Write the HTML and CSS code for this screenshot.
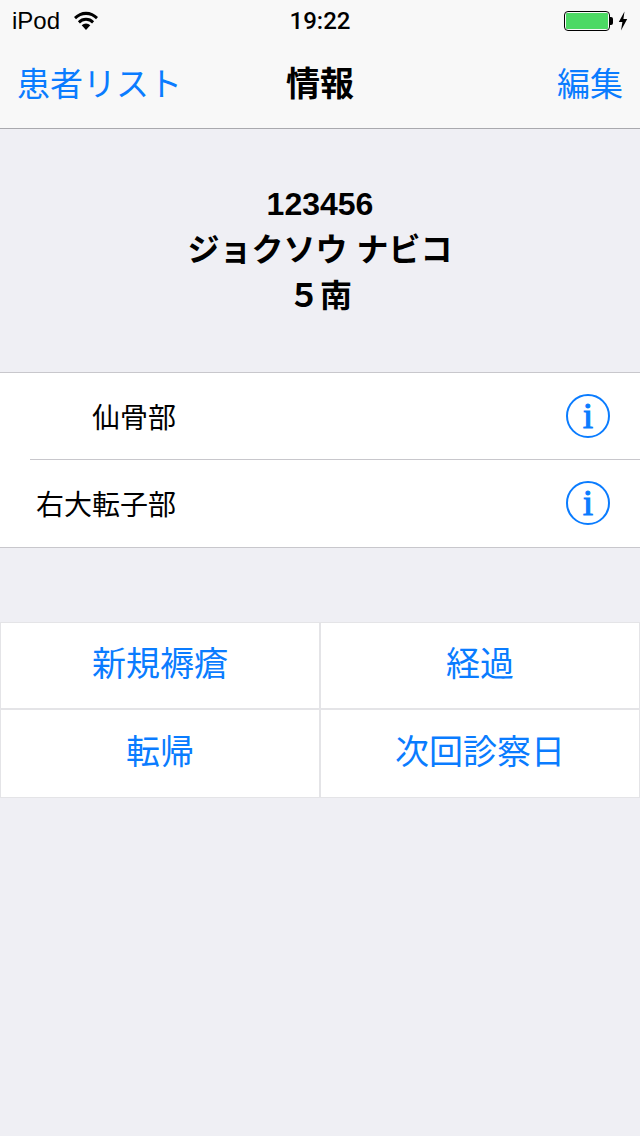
FILE: index.html
```html
<!DOCTYPE html>
<html lang="ja">
<head>
    <meta charset="UTF-8">
    <title>情報</title>
    <link rel="stylesheet" href="styles.css">
</head>
<body>
    <header class="top">
        <div class="status">
            <div class="status-left">
                <span>iPod</span>
                <svg class="wifi" width="26" height="20" viewBox="0 0 26 20">
                    <path d="M1 6 A16.5 16.5 0 0 1 25 6 L23 8.3 A13.6 13.6 0 0 0 3 8.3 Z" fill="#000"/>
                    <path d="M4.9 10.2 A11.3 11.3 0 0 1 21.1 10.2 L19.1 12.4 A8.4 8.4 0 0 0 6.9 12.4 Z" fill="#000"/>
                    <path d="M8.7 14.2 A6 6 0 0 1 17.3 14.2 L13 19 Z" fill="#000"/>
                </svg>
            </div>
            <span class="clock">19:22</span>
            <div class="status-right">
                <span class="battery"><span class="battery-fill"></span></span>
                <span class="battery-tip"></span>
                <svg class="bolt" width="10" height="20" viewBox="0 0 10 20">
                    <path d="M6.5 0.5 L0.8 11 L4.4 11 L3 19.5 L9.2 8 L5.4 8 Z" fill="#000"/>
                </svg>
            </div>
        </div>
        <nav class="navbar">
            <a class="nav-link">患者リスト</a>
            <h1 class="nav-title">情報</h1>
            <a class="nav-link">編集</a>
        </nav>
    </header>

    <section class="patient">
        <p>123456</p>
        <p>ジョクソウ ナビコ</p>
        <p>５南</p>
    </section>

    <ul class="wounds">
        <li class="wound">
            <span class="wound-name">仙骨部</span>
            <svg class="info" width="44" height="44" viewBox="0 0 44 44">
                <circle cx="22" cy="22" r="21" fill="none" stroke="#0a7cff" stroke-width="2"/>
                <text x="22" y="34" text-anchor="middle" class="info-i">i</text>
            </svg>
        </li>
        <li class="wound">
            <span class="wound-name">右大転子部</span>
            <svg class="info" width="44" height="44" viewBox="0 0 44 44">
                <circle cx="22" cy="22" r="21" fill="none" stroke="#0a7cff" stroke-width="2"/>
                <text x="22" y="34" text-anchor="middle" class="info-i">i</text>
            </svg>
        </li>
    </ul>

    <div class="actions">
        <button class="action">新規褥瘡</button>
        <button class="action">経過</button>
        <button class="action">転帰</button>
        <button class="action">次回診察日</button>
    </div>
</body>
</html>
```

FILE: styles.css
```css
* {
    margin: 0;
    padding: 0;
    box-sizing: border-box;
}

body {
    width: 640px;
    height: 1136px;
    overflow: hidden;
    background: #efeff4;
    color: #000;
    font-family: "Liberation Sans", "Noto Sans CJK JP", sans-serif;
}

.top {
    height: 129px;
    background: #f8f8f8;
    border-bottom: 1px solid #a9a9ae;
}

.status {
    height: 40px;
    padding: 1px 12px 0;
    display: flex;
    align-items: center;
    justify-content: space-between;
    position: relative;
    font-size: 24px;
}

.status-left {
    display: flex;
    align-items: center;
    gap: 13px;
}

.clock {
    position: absolute;
    left: 0;
    right: 0;
    text-align: center;
    font-family: Roboto, sans-serif;
    font-weight: 500;
}

.status-right {
    display: flex;
    align-items: center;
}

.battery {
    width: 46px;
    height: 20px;
    border: 1.5px solid #000;
    border-radius: 4px;
    padding: 1px;
    display: block;
}

.battery-fill {
    display: block;
    height: 100%;
    background: #4cd964;
    border-radius: 1px;
}

.battery-tip {
    width: 3px;
    height: 8px;
    background: #000;
    border-radius: 0 2px 2px 0;
    margin-right: 5px;
}

.navbar {
    height: 88px;
    padding: 0 17px 5px;
    display: flex;
    align-items: center;
    justify-content: space-between;
    position: relative;
}

.nav-link {
    font-size: 33px;
    color: #0a7cff;
}

.nav-title {
    position: absolute;
    left: 0;
    right: 0;
    text-align: center;
    font-size: 34px;
    font-weight: 700;
}

.patient {
    height: 243px;
    padding-top: 52px;
    text-align: center;
    font-size: 32px;
    font-weight: 700;
    line-height: 46px;
}

.wounds {
    list-style: none;
    background: #fff;
    border-top: 1px solid #c8c7cc;
    border-bottom: 1px solid #c8c7cc;
}

.wound {
    height: 86px;
    display: flex;
    align-items: center;
    justify-content: space-between;
    padding-right: 30px;
    position: relative;
}

.wound + .wound {
    height: 88px;
}

.wound + .wound::before {
    content: "";
    position: absolute;
    top: 0;
    left: 30px;
    right: 0;
    border-top: 1px solid #c8c7cc;
}

.wound-name {
    width: 176px;
    text-align: right;
    font-size: 28px;
}

.info-i {
    font-family: "Liberation Serif", serif;
    font-size: 36px;
    fill: #0a7cff;
    stroke: #0a7cff;
    stroke-width: 1.2px;
}

.actions {
    margin-top: 74px;
    display: grid;
    grid-template-columns: 320px 320px;
    grid-template-rows: 87px 87px;
    background: #e4e4e7;
    border-top: 1px solid #e4e4e7;
    border-bottom: 1px solid #e4e4e7;
}

.action {
    background: #fff;
    border: none;
    border-left: 1px solid #e4e4e7;
    border-right: 1px solid #e4e4e7;
    border-bottom: 2px solid #e4e4e7;
    padding-bottom: 8px;
    font-family: inherit;
    font-size: 34px;
    color: #0a7cff;
}

.action:nth-child(n+3) {
    border-bottom: none;
}
```
